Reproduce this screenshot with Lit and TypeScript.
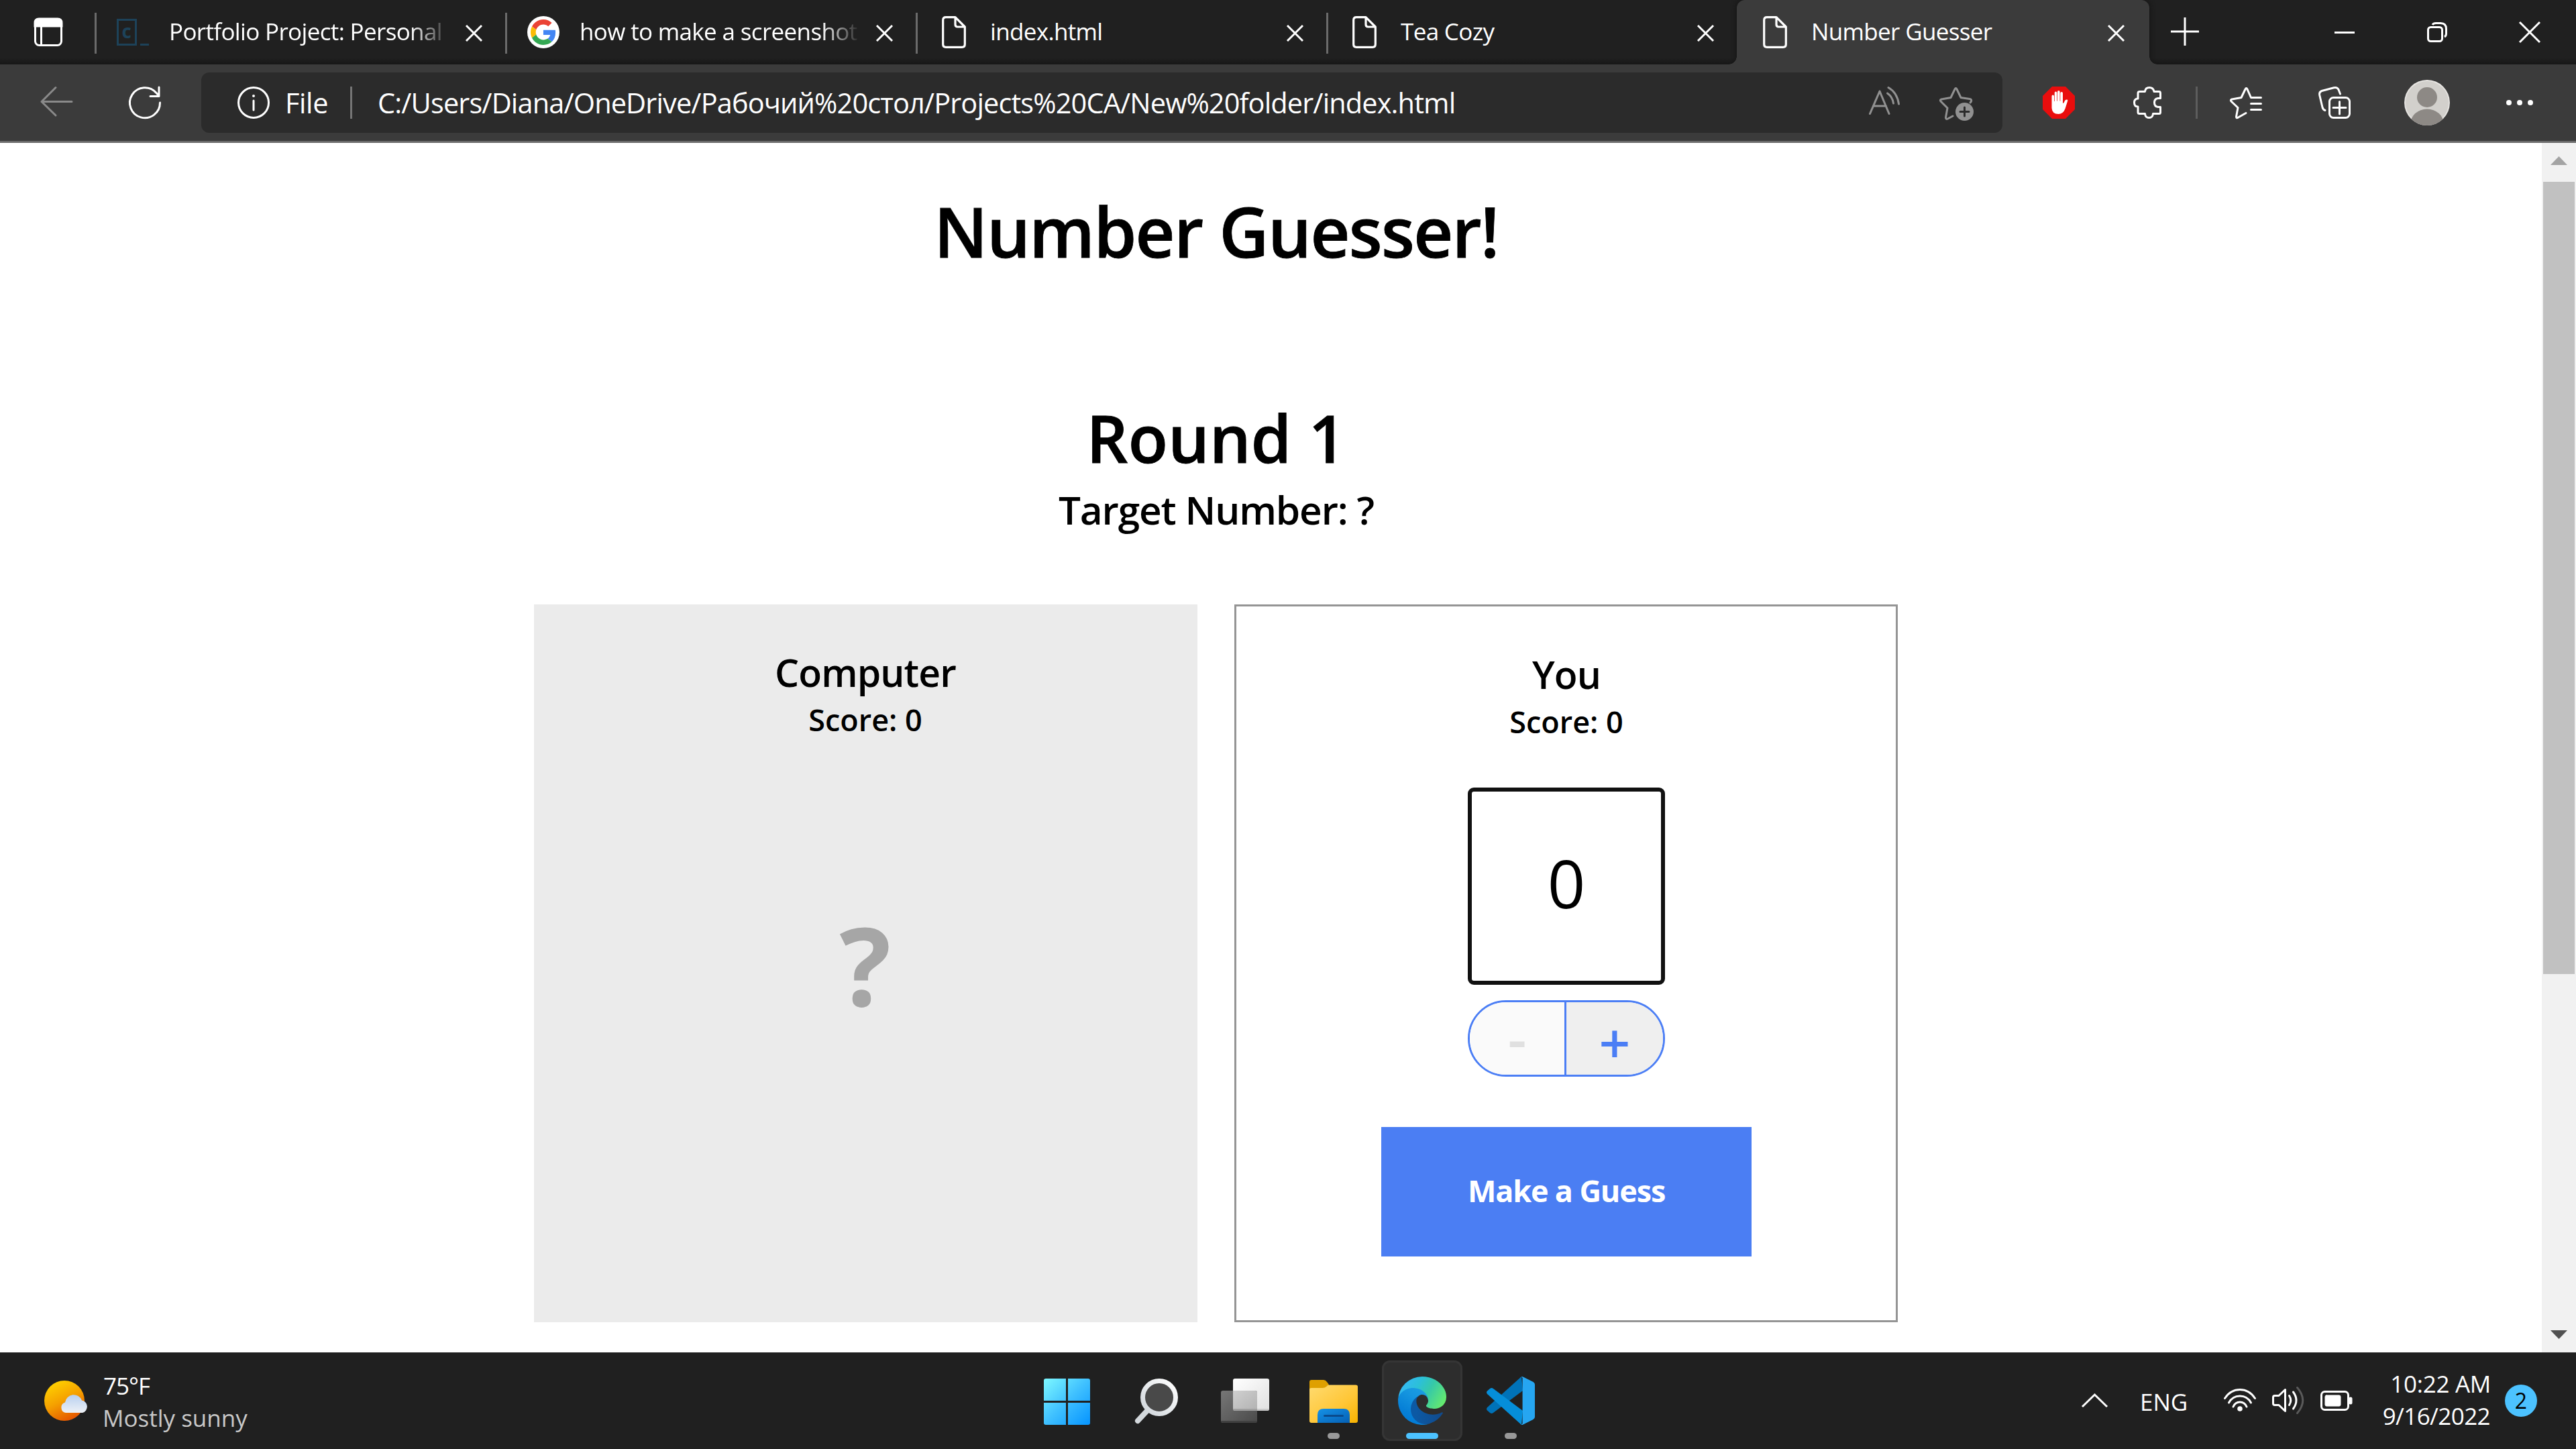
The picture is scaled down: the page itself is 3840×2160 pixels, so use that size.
import { LitElement, html, css } from "lit";
import { customElement } from "lit/decorators.js";

const docIcon = html`<svg class="i-doc" viewBox="0 0 36 48"><path d="M7 1.7H20L34.3 16V42Q34.3 46.3 30 46.3H6Q1.7 46.3 1.7 42V6Q1.7 1.7 6 1.7ZM20 1.7V12.5Q20 16 23.5 16H34.3" /></svg>`;

const codeIcon = html`<svg class="i-code" viewBox="0 0 48 48"><rect x="1.5" y="5.500" width="27" height="37" /><path d="M35 42.500H48" /><text x="7.500" y="33">c</text></svg>`;

const googleIcon = html`<svg class="i-google" viewBox="0 0 48 48">
  <circle cx="24" cy="24" r="24" fill="#fff" />
  <g transform="translate(5 5) scale(.79)">
    <path fill="#EA4335" d="M24 9.500c3.540 0 6.710 1.220 9.210 3.600l6.850-6.850C35.900 2.380 30.470 0 24 0 14.620 0 6.510 5.380 2.560 13.220l7.980 6.190C12.430 13.720 17.740 9.500 24 9.500z" />
    <path fill="#4285F4" d="M46.980 24.550c0-1.570-.15-3.090-.38-4.550H24v9.020h12.940c-.58 2.960-2.260 5.480-4.780 7.180l7.730 6c4.510-4.180 7.090-10.360 7.090-17.650z" />
    <path fill="#FBBC05" d="M10.530 28.590c-.48-1.450-.76-2.990-.76-4.590s.27-3.140.76-4.590l-7.980-6.190C.92 16.460 0 20.120 0 24s.92 7.540 2.560 10.780l7.970-6.190z" />
    <path fill="#34A853" d="M24 48c6.480 0 11.930-2.130 15.890-5.810l-7.730-6c-2.150 1.450-4.920 2.300-8.160 2.300-6.260 0-11.570-4.220-13.470-9.910l-7.980 6.190C6.510 42.620 14.620 48 24 48z" />
  </g>
</svg>`;

const closeIcon = html`<svg class="i-x" viewBox="0 0 25 25"><path d="M1 1L24 24M24 1L1 24" /></svg>`;

const tabs = [
  { title: "Portfolio Project: Personal", icon: codeIcon, cls: "t1" },
  { title: "how to make a screenshot", icon: googleIcon, cls: "t2" },
  { title: "index.html", icon: docIcon, cls: "t3" },
  { title: "Tea Cozy", icon: docIcon, cls: "t4" },
  { title: "Number Guesser", icon: docIcon, cls: "t5 active" },
];

@customElement("browser-tabs")
class BrowserTabs extends LitElement {
  static styles = css`
    :host { display: flex; height: 96px; background: linear-gradient(#202020 86px, #171717 96px); color: #fff; font: 35px/48px "Open Sans", "Noto Sans", sans-serif; }
    svg { display: block; fill: none; stroke: #fff; stroke-width: 3; overflow: visible; }
    .lead { width: 141px; padding: 27px 0 0 51px; box-sizing: border-box; flex: none; }
    .lead svg { width: 42px; height: 42px; }
    .tab { width: 612px; flex: none; display: flex; box-sizing: border-box; position: relative; }
    .line { width: 3px; height: 61px; margin: 19px 30px 0 0; background: #6b6b6b; }
    .fav { width: 48px; height: 48px; margin-top: 24px; display: flex; justify-content: center; }
    .i-doc { width: 36px; height: 48px; stroke-width: 3.2; stroke-linejoin: round; }
    .i-code, .i-google { width: 48px; height: 48px; }
    .i-code { stroke: #1d4259; }
    .i-code text { fill: #1d4259; stroke: none; font: 700 28px/1 "Open Sans", sans-serif; }
    .i-google { stroke: none; }
    .title { width: 418px; margin: 23px 0 0 30px; white-space: nowrap; letter-spacing: -0.65px; }
    .t1 .title, .t2 .title { -webkit-mask-image: linear-gradient(90deg, #000 360px, transparent 418px); mask-image: linear-gradient(90deg, #000 360px, transparent 418px); }
    .i-x { width: 25px; height: 25px; margin: 37px 0 0 24px; }
    .active { width: 615px; background: #3b3b3b; border-radius: 12px 12px 0 0; box-shadow: 0 0 8px #111; clip-path: inset(0 -20px 0 -20px); }
    .active .line { background: transparent; }
    .active::before, .active::after { content: ""; position: absolute; bottom: 0; width: 12px; height: 12px; }
    .active::before { left: -12px; background: radial-gradient(circle at 0 0, transparent 11.500px, #3b3b3b 12px); }
    .active::after { right: -12px; background: radial-gradient(circle at 100% 0, transparent 11.500px, #3b3b3b 12px); }
    .plus { width: 42px; height: 42px; margin: 26px 0 0 32px; }
    .min { width: 30px; height: 30px; margin: 33px 0 0 202px; }
    .win { width: 30px; height: 30px; margin: 33px 0 0 108px; }
  `;
  render() {
    return html`
      <div class="lead"><svg viewBox="0 0 42 42"><rect x="1.5" y="1.5" width="39" height="39" rx="6" /><path d="M1 12V7Q1 1 7 1H35Q41 1 41 7V12Z" fill="#fff" /><path d="M10.500 12V40" /></svg></div>
      ${tabs.map((t) => html`<div class="tab ${t.cls}"><span class="line"></span><span class="fav">${t.icon}</span><span class="title">${t.title}</span>${closeIcon}</div>`)}
      <svg class="plus" viewBox="0 0 42 42"><path d="M21 0V42M0 21H42" /></svg>
      <svg class="min" viewBox="0 0 30 30"><path d="M0 15.500H30" /></svg>
      <svg class="win" viewBox="0 0 30 30"><rect x="1.500" y="7.500" width="21" height="21" rx="4" /><path d="M8 4Q9.500 1.500 13 1.500H20Q28.500 1.500 28.500 10V17Q28.500 20.500 26 22" /></svg>
      <svg class="win" viewBox="0 0 30 30"><path d="M0 0L30 30M30 0L0 30" /></svg>
    `;
  }
}

@customElement("browser-toolbar")
class BrowserToolbar extends LitElement {
  static styles = css`
    :host { display: flex; align-items: flex-start; height: 117px; box-sizing: border-box; border-bottom: 3px solid #6b6b6b; background: #3b3b3b; color: #fff; font: 41.500px/60px "Open Sans", "Noto Sans", sans-serif; }
    svg { display: block; flex: none; fill: none; stroke: #fff; stroke-width: 3; stroke-linecap: round; stroke-linejoin: round; overflow: visible; }
    .back { width: 48px; height: 44px; margin: 33px 0 0 60px; stroke: #8a8a8a; }
    .reload { width: 48px; height: 48px; margin: 33px 0 0 84px; }
    .bar { width: 2685px; height: 90px; margin: 12px 0 0 60px; border-radius: 12px; background: #2b2b2b; display: flex; align-items: flex-start; }
    .info { width: 48px; height: 48px; margin: 21px 0 0 54px; }
    .file { width: 97px; margin: 15px 0 0 23px; white-space: nowrap; letter-spacing: -0.4px; }
    .sep { width: 3px; height: 48px; margin-top: 21px; background: #757575; flex: none; }
    .url { width: 2222px; margin: 15px 0 0 38px; white-space: nowrap; letter-spacing: -0.88px; }
    .read { width: 46px; height: 42px; margin: 21px 0 0 1px; stroke: #919191; }
    .addfav { width: 51px; height: 50px; margin: 22px 0 0 59px; stroke: #919191; }
    .block { width: 48px; height: 48px; margin: 33px 0 0 60px; stroke: none; }
    .ext { width: 42px; height: 48px; margin: 33px 0 0 87px; }
    .sep2 { width: 3px; height: 48px; margin: 33px 0 0 51px; background: #5d5d5d; }
    .favs { width: 48px; height: 47px; margin: 34px 0 0 48px; }
    .coll { width: 48px; height: 48px; margin: 33px 0 0 84px; }
    .avatar { width: 68px; height: 68px; margin: 23px 0 0 80px; stroke: none; }
    .dots { width: 40px; height: 8px; margin: 53px 0 0 84px; fill: #fff; stroke: none; }
  `;
  render() {
    return html`
      <svg class="back" viewBox="0 0 48 44"><path d="M23 1.500L2 22.500L23 43M2 22.500H47" /></svg>
      <svg class="reload" viewBox="0 0 48 48"><path d="M46.500 24A22.500 22.500 0 1 1 41 9.500L45 14M45 1V14.500H32" /></svg>
      <div class="bar">
        <svg class="info" viewBox="0 0 48 48"><circle cx="24" cy="24" r="22.500" /><path d="M24 21V35" /><circle cx="24" cy="14" r="1" fill="#fff" stroke-width="2" /></svg>
        <span class="file">File</span><span class="sep"></span>
        <span class="url">C:/Users/Diana/OneDrive/Рабочий%20стол/Projects%20CA/New%20folder/index.html</span>
        <svg class="read" viewBox="0 0 46 42"><path d="M1.500 40.500L16 7L30 40.500M6.500 29H25.500M27.500 10Q35 15 36.500 25M29 1.500Q42 9 44.500 26" /></svg>
        <svg class="addfav" viewBox="0 0 51 50"><path d="M46 23L47.500 21Q48.500 18 45 17.500L32 15.500L26 3Q24.500 0 23 3L17 15.500L3 18Q0 19 2.500 21.500L12 31L9.500 45Q9.500 48.500 12.500 47L20 43" /><circle cx="37.500" cy="36.500" r="13.500" fill="#919191" stroke="none" /><path d="M37.500 30V43M31 36.500H44" stroke="#2b2b2b" /></svg>
      </div>
      <svg class="block" viewBox="0 0 48 48"><path d="M14 0H34L48 14V34L34 48H14L0 34V14Z" fill="#e90d0d" /><path d="M13.500 32V14.500Q13.500 12.500 15.200 12.500T17 14.500V22H17.700V9.500Q17.700 7.500 19.500 7.500T21.300 9.500V21.500H22V8Q22 6 23.800 6T25.600 8V21.500H26.300V10Q26.300 8 28.200 8T30 10V25Q31.500 25 33 21Q34 19 36.500 19.500Q38 20 37 22L33.500 33Q30.500 41 23.500 41Q14 41 13.500 32Z" fill="#fff" /></svg>
      <svg class="ext" viewBox="0 0 42 48"><path d="M9.500 7.500H17.500Q18 1.500 24 1.500T31 7.500H38.500Q40.500 7.500 40.500 10V17.500H37Q31.500 18 31.500 24T37 30.500H40.500V38.500Q40.500 40.500 38.500 40.500H29.500Q29 46.500 23.500 46.500T17.500 40.500H9.500Q7 40.500 7 38.500V30Q1.500 30 1.500 24T7 18V10Q7 7.500 9.500 7.500Z" /></svg>
      <span class="sep2"></span>
      <svg class="favs" viewBox="0 0 48 47"><path d="M46.500 15.500H31.500L26 3Q24.500 0 23 3L17 15.500L3 18Q0 19 2.500 21.500L12 30.500L9.500 44Q9.500 47 12.500 45L24 38.500M31.500 24.500H46.500M31.500 33.500H46.500" /></svg>
      <svg class="coll" viewBox="0 0 48 48"><rect x="16.500" y="16.500" width="30" height="30" rx="6" /><path d="M31.500 22.500V41M22 31.500H41M10 35.500Q7 34.500 6 31L1.700 12.500Q1 8 5 6.500L23 1.700Q28 .5 30 4.500L32.500 11" /></svg>
      <svg class="avatar" viewBox="0 0 68 68"><defs><clipPath id="av"><circle cx="34" cy="34" r="34" /></clipPath></defs><circle cx="34" cy="34" r="34" fill="#e6e4e1" /><circle cx="34" cy="34" r="32" fill="#d2d0cc" /><g clip-path="url(#av)" fill="#8d8985"><circle cx="34" cy="26" r="15" /><ellipse cx="34" cy="66" rx="25" ry="22.500" /></g></svg>
      <svg class="dots" viewBox="0 0 40 8"><circle cx="4" cy="4" r="4" /><circle cx="20" cy="4" r="4" /><circle cx="36" cy="4" r="4" /></svg>
    `;
  }
}

@customElement("guess-game")
class GuessGame extends LitElement {
  static styles = css`
    :host { display: flex; height: 1803px; background: #fff; color: #000; overflow: hidden; font-family: "Open Sans", "Noto Sans", sans-serif; font-weight: 600; }
    .page { width: 3626px; margin-right: 163px; display: flex; flex-direction: column; align-items: center; flex: none; }
    .h1 { margin-top: 71px; font-size: 102.500px; line-height: 120px; white-space: nowrap; letter-spacing: -1.7px; -webkit-text-stroke: 0.8px #000; }
    .h2 { margin-top: 193px; font-size: 97px; line-height: 110px; white-space: nowrap; letter-spacing: 0.2px; -webkit-text-stroke: 0.8px #000; }
    .target { margin-top: 17px; font-size: 58.500px; line-height: 70px; white-space: nowrap; letter-spacing: -1.16px; }
    .cards { margin: 107px 2px 0 0; display: flex; gap: 55px; }
    .card { width: 989px; height: 1070px; box-sizing: border-box; display: flex; flex-direction: column; align-items: center; padding-top: 66px; }
    .cpu { background: #ebebeb; }
    .you { border: 3px solid #959595; padding-left: 2px; }
    .name { font-size: 57px; line-height: 70px; letter-spacing: -0.9px; }
    .score { margin-top: 8px; font-size: 45px; line-height: 56px; }
    .q { margin-top: 237px; font-size: 161px; line-height: 200px; font-weight: 700; color: #a6a6a6; }
    .num { margin-top: 70px; width: 294px; height: 294px; box-sizing: border-box; border: 6px solid #111; border-radius: 9px; display: flex; align-items: center; justify-content: center; padding-bottom: 10px; font-size: 99px; line-height: 130px; font-weight: 400; }
    .step { margin-top: 23px; width: 294px; height: 114px; box-sizing: border-box; border: 3px solid #4b7ef5; border-radius: 57px; display: flex; font-weight: 600; text-align: center; }
    .minus { width: 144px; height: 108px; box-sizing: border-box; border-right: 3px solid #4b7ef5; border-radius: 54px 0 0 54px; background: #fafafa; color: #e0e0e0; font-size: 86px; line-height: 106px; }
    .plus { width: 144px; height: 108px; border-radius: 0 54px 54px 0; background: #efefef; color: #4b7ef5; font-size: 82px; line-height: 118px; }
    .btn { margin-top: 75px; width: 552px; height: 193px; line-height: 190px; background: #4b7ef3; color: #fff; font-size: 45px; font-weight: 700; letter-spacing: -1.16px; text-align: center; }
    .scroll { width: 51px; background: #f1f1f1; display: flex; flex-direction: column; align-items: center; flex: none; }
    .up { width: 25px; height: 13px; margin-top: 20px; fill: #a3a3a3; }
    .thumb { width: 47px; height: 1181px; margin-top: 25px; background: #c1c1c1; }
    .down { width: 25px; height: 13px; margin-top: 531px; fill: #505050; }
  `;
  render() {
    return html`
      <div class="page">
        <div class="h1">Number Guesser!</div>
        <div class="h2">Round 1</div>
        <div class="target">Target Number: ?</div>
        <div class="cards">
          <div class="card cpu"><div class="name">Computer</div><div class="score">Score: 0</div><div class="q">?</div></div>
          <div class="card you">
            <div class="name">You</div><div class="score">Score: 0</div>
            <div class="num">0</div>
            <div class="step"><span class="minus">-</span><span class="plus">+</span></div>
            <div class="btn">Make a Guess</div>
          </div>
        </div>
      </div>
      <div class="scroll">
        <svg class="up" viewBox="0 0 25 13"><path d="M12.500 0L25 13H0Z" /></svg>
        <div class="thumb"></div>
        <svg class="down" viewBox="0 0 25 13"><path d="M0 0H25L12.500 13Z" /></svg>
      </div>
    `;
  }
}

@customElement("task-bar")
class TaskBar extends LitElement {
  static styles = css`
    :host { display: flex; height: 144px; background: #202020; color: #fff; font: 35px/48px "Open Sans", "Noto Sans", sans-serif; white-space: nowrap; }
    svg { display: block; flex: none; overflow: visible; fill: none; }
    .sun { width: 66px; height: 60px; margin: 42px 0 0 66px; }
    .weather { width: 1403px; margin: 26px 0 0 21px; }
    .temp { letter-spacing: -1px; padding-left: 1px; }
    .desc { color: #c8c8c8; }
    .start { width: 69px; height: 69px; margin: 39px 0 0 0; }
    .search { width: 64px; height: 67px; margin: 39px 0 0 67px; }
    .views { width: 72px; height: 66px; margin: 39px 0 0 64px; }
    .app { display: flex; flex-direction: column; align-items: center; height: 120px; width: 120px; margin-top: 12px; box-sizing: border-box; padding-top: 24px; border-radius: 12px; }
    .folder { margin-left: 36px; }
    .folder svg, .edge svg, .code svg { width: 72px; height: 72px; }
    .edge { margin-left: 12px; background: #2d2d2d; box-shadow: inset 0 0 0 3px #353535; }
    .code { margin-left: 12px; }
    .dot { width: 18px; height: 9px; margin-top: 12px; border-radius: 4.500px; background: #999; }
    .edge .dot { width: 48px; background: #4cc2ff; }
    .chev { width: 39px; height: 21px; margin: 61px 0 0 791px; stroke: #fff; stroke-width: 3; }
    .lang { width: 69px; margin: 50px 0 0 48px; }
    .wifi, .vol, .batt { stroke: #fff; stroke-width: 3; stroke-linecap: round; stroke-linejoin: round; }
    .wifi { width: 48px; height: 34px; margin: 54px 0 0 56px; }
    .vol { width: 48px; height: 41px; margin: 51px 0 0 24px; }
    .batt { width: 48px; height: 30px; margin: 57px 0 0 24px; }
    .clock { width: 206px; margin-top: 23px; text-align: right; }
    .time { letter-spacing: -0.28px; }
    .date { letter-spacing: -0.6px; padding-right: 1px; }
    .badge { width: 48px; height: 48px; margin: 48px 0 0 21px; border-radius: 50%; background: #4cc2ff; color: #000; text-align: center; font-size: 32px; }
  `;
  render() {
    return html`
      <svg class="sun" viewBox="0 0 66 60">
        <defs>
          <linearGradient id="sun" x1=".2" y1="0" x2=".7" y2="1"><stop stop-color="#ffd500" /><stop offset=".5" stop-color="#f5a000" /><stop offset="1" stop-color="#e35000" /></linearGradient>
          <linearGradient id="cl" x1="0" y1="0" x2="0" y2="1"><stop stop-color="#b8d0f0" /><stop offset="1" stop-color="#eef1f6" /></linearGradient>
        </defs>
        <circle cx="30" cy="30" r="30" fill="url(#sun)" />
        <path d="M32 48A8 8 0 0 1 31 32.500A13 13 0 0 1 56 29.500A9.500 9.500 0 0 1 57 48Z" fill="url(#cl)" />
      </svg>
      <div class="weather"><div class="temp">75°F</div><div class="desc">Mostly sunny</div></div>
      <svg class="start" viewBox="0 0 69 69">
        <defs><linearGradient id="w" gradientUnits="userSpaceOnUse" x1="0" y1="0" x2="69" y2="69"><stop stop-color="#7df8ff" /><stop offset=".5" stop-color="#3fc0ff" /><stop offset="1" stop-color="#0594ff" /></linearGradient></defs>
        <path fill="url(#w)" d="M3 0H33V33H0V3Q0 0 3 0ZM36 0H66Q69 0 69 3V33H36ZM0 36H33V69H3Q0 69 0 66ZM36 36H69V66Q69 69 66 69H36Z" />
      </svg>
      <svg class="search" viewBox="0 0 64 67">
        <defs><linearGradient id="s" x1="1" y1="0" x2="0" y2="1"><stop stop-color="#fff" /><stop offset="1" stop-color="#cfd5da" /></linearGradient></defs>
        <path d="M18 48L4 63" stroke="#d3d8dc" stroke-width="8" stroke-linecap="round" />
        <circle cx="36" cy="28" r="24.500" fill="#494949" stroke="url(#s)" stroke-width="7" />
      </svg>
      <svg class="views" viewBox="0 0 72 66">
        <defs><linearGradient id="v" x1="0" y1="0" x2="1" y2="1"><stop stop-color="#fff" /><stop offset="1" stop-color="#e0e0e0" /></linearGradient>
        <linearGradient id="v2" x1="0" y1="0" x2="1" y2="1"><stop stop-color="#777" /><stop offset="1" stop-color="#4a4a4a" /></linearGradient>
        <linearGradient id="v3" x1="0" y1="0" x2="1" y2="1"><stop stop-color="#d0d0d0" /><stop offset="1" stop-color="#b2b2b2" /></linearGradient></defs>
        <rect x="18" width="54" height="48" rx="3" fill="url(#v)" /><path d="M18 45H72Q72 48 69 48H18Z" fill="#c9c9c9" />
        <rect y="18" width="54" height="48" rx="3" fill="url(#v2)" /><path d="M18 18H51Q54 18 54 21V48H21Q18 48 18 45Z" fill="url(#v3)" /><path d="M18 45H54V48H21Q18 48 18 45Z" fill="#a0a0a0" /><path d="M0 63H54Q54 66 51 66H3Q0 66 0 63Z" fill="#414141" />
      </svg>
      <div class="app folder">
        <svg viewBox="0 0 72 72">
          <defs><linearGradient id="f" x1="0" y1="0" x2="1" y2="1"><stop stop-color="#ffdb70" /><stop offset=".6" stop-color="#ffc636" /><stop offset="1" stop-color="#f7b200" /></linearGradient>
          <linearGradient id="fb" x1="0" y1="0" x2="1" y2="1"><stop stop-color="#1592e6" /><stop offset="1" stop-color="#0560b5" /></linearGradient></defs>
          <path d="M0 20V8Q0 5 3 5H21Q24 5 26 8L29 12L20 20Z" fill="#dfa000" />
          <path d="M0 66V19Q0 17 3 17H20Q23 17 25 15L28 12.500H69Q72 12.500 72 15V66Q72 69 69 69H3Q0 69 0 66Z" fill="url(#f)" />
          <path d="M12 69V57Q12 48 21 48H51Q60 48 60 57V69Z" fill="url(#fb)" /><path d="M22.500 58.500H49.500" stroke="#0a4b8c" stroke-width="3" stroke-linecap="round" />
        </svg><span class="dot"></span>
      </div>
      <div class="app edge">
        <svg viewBox="0 0 256 256">
          <defs>
            <linearGradient id="e1" x1=".2" y1=".5" x2="1" y2=".5"><stop stop-color="#0c59a4" /><stop offset="1" stop-color="#114a8b" /></linearGradient>
            <linearGradient id="e2" x1=".7" y1="0" x2=".2" y2="1"><stop stop-color="#1b9de2" /><stop offset=".3" stop-color="#1595df" /><stop offset=".7" stop-color="#0680d7" /><stop offset="1" stop-color="#0078d4" /></linearGradient>
            <linearGradient id="e3" x1="0" y1=".3" x2="1" y2=".7"><stop stop-color="#35b8f8" /><stop offset=".35" stop-color="#2cc0d8" /><stop offset=".6" stop-color="#36c9a8" /><stop offset="1" stop-color="#66eb6e" /></linearGradient>
          </defs>
          <path fill="url(#e1)" d="M231 190.500c-3.400 1.800-6.900 3.400-10.500 4.700a101.200 101.200 0 0 1-35.600 6.400c-46.900 0-87.700-32.200-87.700-73.600.1-11.400 6.400-21.900 16.400-27.300-42.400 1.800-53.300 46-53.300 71.900 0 73.200 67.500 80.600 82 80.600 7.900 0 19.700-2.300 26.800-4.500l1.300-.4a128.300 128.300 0 0 0 66.600-52.800 4 4 0 0 0-5.600-5.600z" />
          <path fill="url(#e2)" d="M105.700 241.500a79.200 79.200 0 0 1-22.700-21.400 80.700 80.700 0 0 1 29.500-120c3.200-1.500 8.500-4.100 15.600-4a32.400 32.400 0 0 1 25.700 13 31.900 31.900 0 0 1 6.300 18.700c0-.2 24.500-79.600-80-79.600-43.900 0-80 41.600-80 78.200a130.200 130.200 0 0 0 12.100 56 128 128 0 0 0 156.400 67 75.500 75.500 0 0 1-62.800-8z" />
          <path fill="url(#e3)" d="M152.300 148.900c-.9 1-3.400 2.500-3.400 5.600 0 2.600 1.700 5.200 4.800 7.300 14.300 10 41.400 8.600 41.500 8.600 10.700 0 21.100-2.900 30.300-8.300A61.400 61.400 0 0 0 256 109.200c.3-22.400-8-37.300-11.300-43.900C223.500 23.900 177.700 0 128 0A128 128 0 0 0 0 126.200c.5-36.500 36.800-66 80-66 3.500 0 23.500.3 42 10.100 16.300 8.600 24.900 18.900 30.800 29.200 6.200 10.700 7.300 24.100 7.300 29.500s-2.700 13.300-7.800 19.900z" />
        </svg><span class="dot"></span>
      </div>
      <div class="app code">
        <svg viewBox="0 0 72 72">
          <path d="M52 0L54 21L10 54Q7.500 56 5 54L1 50.500Q-1 48.500 1 46Z" fill="#0072b8" />
          <path d="M52 72L54 51L10 18Q7.500 16 5 18L1 21.500Q-1 23.500 1 26Z" fill="#058ed9" />
          <path d="M52 .5Q53 -.5 54.500 .5L69.500 8Q72 9.500 72 12V60Q72 62.500 69.500 64L54.500 71.500Q53 72.500 52 71.500L53.600 70V2Z" fill="#26a6f1" />
        </svg><span class="dot"></span>
      </div>
      <svg class="chev" viewBox="0 0 39 21"><path d="M1 20L19.500 2L38 20" /></svg>
      <div class="lang">ENG</div>
      <svg class="wifi" viewBox="0 0 48 34"><path d="M1.500 14.500Q10 1.500 24 1.500T46.500 14.500M7.500 21Q13 11 24 11T40.500 21M14 27Q17 20 24 20T34 27" /><circle cx="24" cy="30" r="3.800" fill="#fff" stroke="none" /></svg>
      <svg class="vol" viewBox="0 0 48 41"><path d="M1.500 16Q1.500 13.500 4 13.500H10L19.500 4.500V36.500L10 27.500H4Q1.500 27.500 1.500 25ZM25.500 13.500Q30 20.500 25.500 27.500M31.500 8Q40.500 20.500 31.500 33" /><path d="M37.500 1.500Q54 20.500 37.500 39.500" stroke="#5a5a5a" /></svg>
      <svg class="batt" viewBox="0 0 48 30"><rect x="1.500" y="1.500" width="40" height="27" rx="5" /><rect x="7" y="7" width="23" height="16" rx="2" fill="#fff" stroke-width="1" /><path d="M45 12V18" stroke-width="5" /></svg>
      <div class="clock"><div class="time">10:22 AM</div><div class="date">9/16/2022</div></div>
      <div class="badge">2</div>
    `;
  }
}

@customElement("app-root")
class AppRoot extends LitElement {
  static styles = css`
    :host { display: block; width: 3840px; height: 2160px; overflow: hidden; }
  `;
  render() {
    return html`<browser-tabs></browser-tabs><browser-toolbar></browser-toolbar><guess-game></guess-game><task-bar></task-bar>`;
  }
}
